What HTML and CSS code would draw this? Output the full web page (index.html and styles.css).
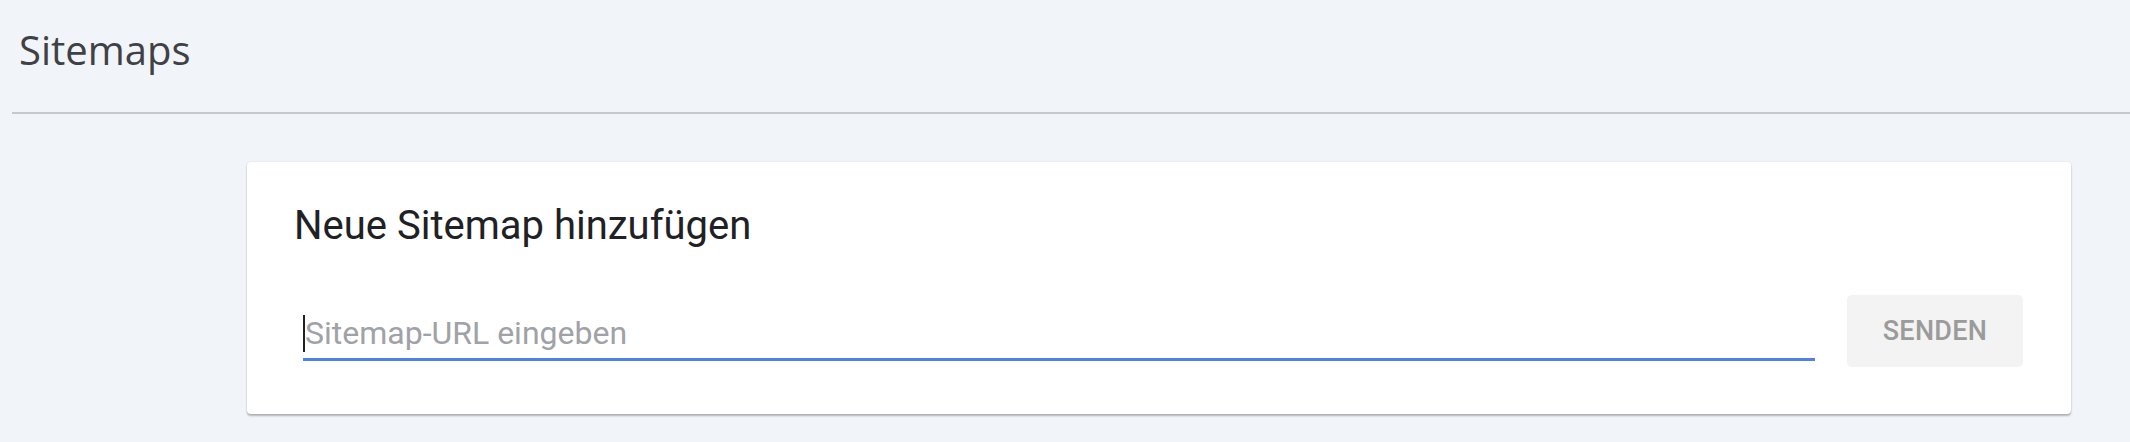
FILE: index.html
```html
<!DOCTYPE html>
<html lang="de">
<head>
<meta charset="utf-8">
<title>Sitemaps</title>
<link rel="stylesheet" href="styles.css">
</head>
<body>
<header class="page-header">
  <h1 class="page-title">Sitemaps</h1>
</header>
<div class="divider"></div>
<section class="card">
  <h2 class="card-title">Neue Sitemap hinzufügen</h2>
  <div class="form-row">
    <div class="field">
      <span class="caret"></span>
      <span class="placeholder">Sitemap-URL eingeben</span>
    </div>
    <button class="submit" type="button">SENDEN</button>
  </div>
</section>
</body>
</html>
```

FILE: styles.css
```css
html, body {
  margin: 0;
  padding: 0;
}
body {
  background: #f1f4f9;
  width: 2130px;
  height: 442px;
  overflow: hidden;
}
.page-header {
  padding: 22px 0 34px 19px;
}
.page-title {
  margin: 0;
  font-family: "Open Sans", "Liberation Sans", sans-serif;
  font-weight: 500;
  font-size: 40px;
  line-height: 56px;
  color: #3f4144;
}
.divider {
  margin-left: 12px;
  border-bottom: 2px solid #c6c8cb;
}
.card {
  margin: 48px 59px 0 247px;
  background: #ffffff;
  border-radius: 4px;
  box-shadow: 0 2px 2px rgba(0, 0, 0, 0.26), 0 0 2px rgba(0, 0, 0, 0.12);
  padding: 40px 48px 47px 47px;
}
.card-title {
  margin: 0;
  font-family: Roboto, "Liberation Sans", sans-serif;
  font-weight: 400;
  font-size: 40px;
  line-height: 48px;
  color: #202124;
}
.form-row {
  display: flex;
  align-items: flex-start;
  gap: 32px;
  margin-left: 9px;
  margin-top: 45px;
}
.field {
  flex: 1;
  display: flex;
  align-items: flex-start;
  margin-top: 20px;
  padding-bottom: 6px;
  border-bottom: 3px solid #5181e8;
}
.caret {
  width: 2px;
  height: 37px;
  background: #202124;
}
.placeholder {
  font-family: Roboto, "Liberation Sans", sans-serif;
  font-size: 32px;
  line-height: 37px;
  color: #9fa2a6;
  margin-left: 0;
}
.submit {
  width: 176px;
  height: 72px;
  border: none;
  border-radius: 5px;
  background: #f3f3f3;
  color: #9b9b9b;
  font-family: Roboto, "Liberation Sans", sans-serif;
  font-weight: 500;
  font-size: 27px;
  letter-spacing: 0.3px;
  padding: 0;
}
```
